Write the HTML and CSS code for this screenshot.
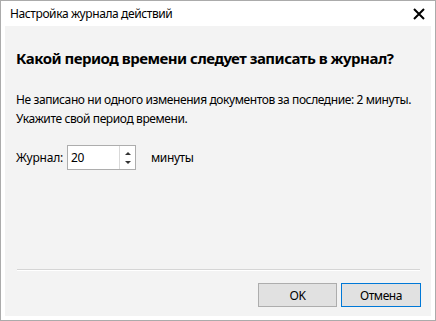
FILE: index.html
```html
<!DOCTYPE html>
<html lang="ru">

<head>
    <meta charset="UTF-8">
    <title>Настройка журнала действий</title>
    <link rel="stylesheet" href="styles.css">
</head>

<body>
    <div class="window">
        <div class="titlebar">
            <span class="title">Настройка журнала действий</span>
            <button class="close" aria-label="Закрыть">
                <svg width="12" height="12" viewBox="0 0 12 12">
                    <path d="M1 1 L11 11 M11 1 L1 11" stroke="#000" stroke-width="2" fill="none"/>
                </svg>
            </button>
        </div>
        <div class="content">
            <h1>Какой период времени следует записать в журнал?</h1>
            <p class="info">Не записано ни одного изменения документов за последние: 2 минуты.<br>Укажите свой период времени.</p>
            <div class="row">
                <label for="minutes">Журнал:</label>
                <div class="spin">
                    <input id="minutes" type="text" value="20">
                    <div class="arrows">
                        <span class="arrow up"></span>
                        <span class="arrow down"></span>
                    </div>
                </div>
                <span class="unit">минуты</span>
            </div>
            <div class="spacer"></div>
            <hr class="sep">
            <div class="buttons">
                <button class="btn">OK</button>
                <button class="btn default">Отмена</button>
            </div>
        </div>
    </div>
</body>

</html>
```

FILE: styles.css
```css
body {
    margin: 0;
    font-family: "Noto Sans", "Open Sans", sans-serif;
    font-size: 12px;
    letter-spacing: -0.4px;
    color: #000;
}

.window {
    width: 436px;
    height: 321px;
    box-sizing: border-box;
    border: 1px solid #ababab;
    background: #fff;
    padding: 0 4px 4px;
    display: flex;
    flex-direction: column;
}

.titlebar {
    height: 25px;
    display: flex;
    align-items: center;
    padding-left: 5px;
}

.title {
    flex: 1;
    font-size: 12px;
}

.close {
    border: none;
    background: none;
    padding: 0;
    margin-right: 5px;
    width: 14px;
    height: 14px;
    display: flex;
    align-items: center;
    justify-content: center;
}

.content {
    flex: 1;
    background: #f3f3f3;
    display: flex;
    flex-direction: column;
    padding: 0 10px 9px 11px;
}

h1 {
    font-size: 15px;
    font-weight: bold;
    letter-spacing: -0.5px;
    margin: 22px 0 0;
    line-height: 20px;
}

.info {
    margin: 22px 0 0;
    line-height: 19px;
}

.row {
    display: flex;
    align-items: center;
    margin-top: 17px;
}

.row label {
    letter-spacing: -0.2px;
}

.spin {
    display: flex;
    width: 69px;
    height: 25px;
    box-sizing: border-box;
    border: 1px solid #adadad;
    background: #fff;
    margin-left: 4px;
}

.spin input {
    border: none;
    outline: none;
    width: 48px;
    padding: 0 0 0 3px;
    font-family: inherit;
    font-size: 12px;
    letter-spacing: inherit;
    background: transparent;
}

.arrows {
    flex: 1;
    border-left: 1px solid #d9d9d9;
    display: flex;
    flex-direction: column;
    align-items: center;
    justify-content: space-between;
    padding: 6px 0 5px;
}

.arrow {
    width: 0;
    height: 0;
    border-left: 3px solid transparent;
    border-right: 3px solid transparent;
}

.arrow.up {
    border-bottom: 3px solid #333;
}

.arrow.down {
    border-top: 3px solid #333;
}

.unit {
    margin-left: 15px;
}

.spacer {
    flex: 1;
}

.sep {
    margin: 0 1px 0 1px;
    border: none;
    border-top: 1px solid #d5d5d5;
    border-bottom: 1px solid #fff;
}

.buttons {
    display: flex;
    justify-content: flex-end;
    gap: 4px;
    margin-top: 12px;
}

.btn {
    width: 79px;
    height: 24px;
    border: 1px solid #adadad;
    background: #e1e1e1;
    font-family: inherit;
    font-size: 12px;
    letter-spacing: inherit;
    padding: 0;
}

.btn.default {
    width: 80px;
    border-color: #0078d7;
}
```
